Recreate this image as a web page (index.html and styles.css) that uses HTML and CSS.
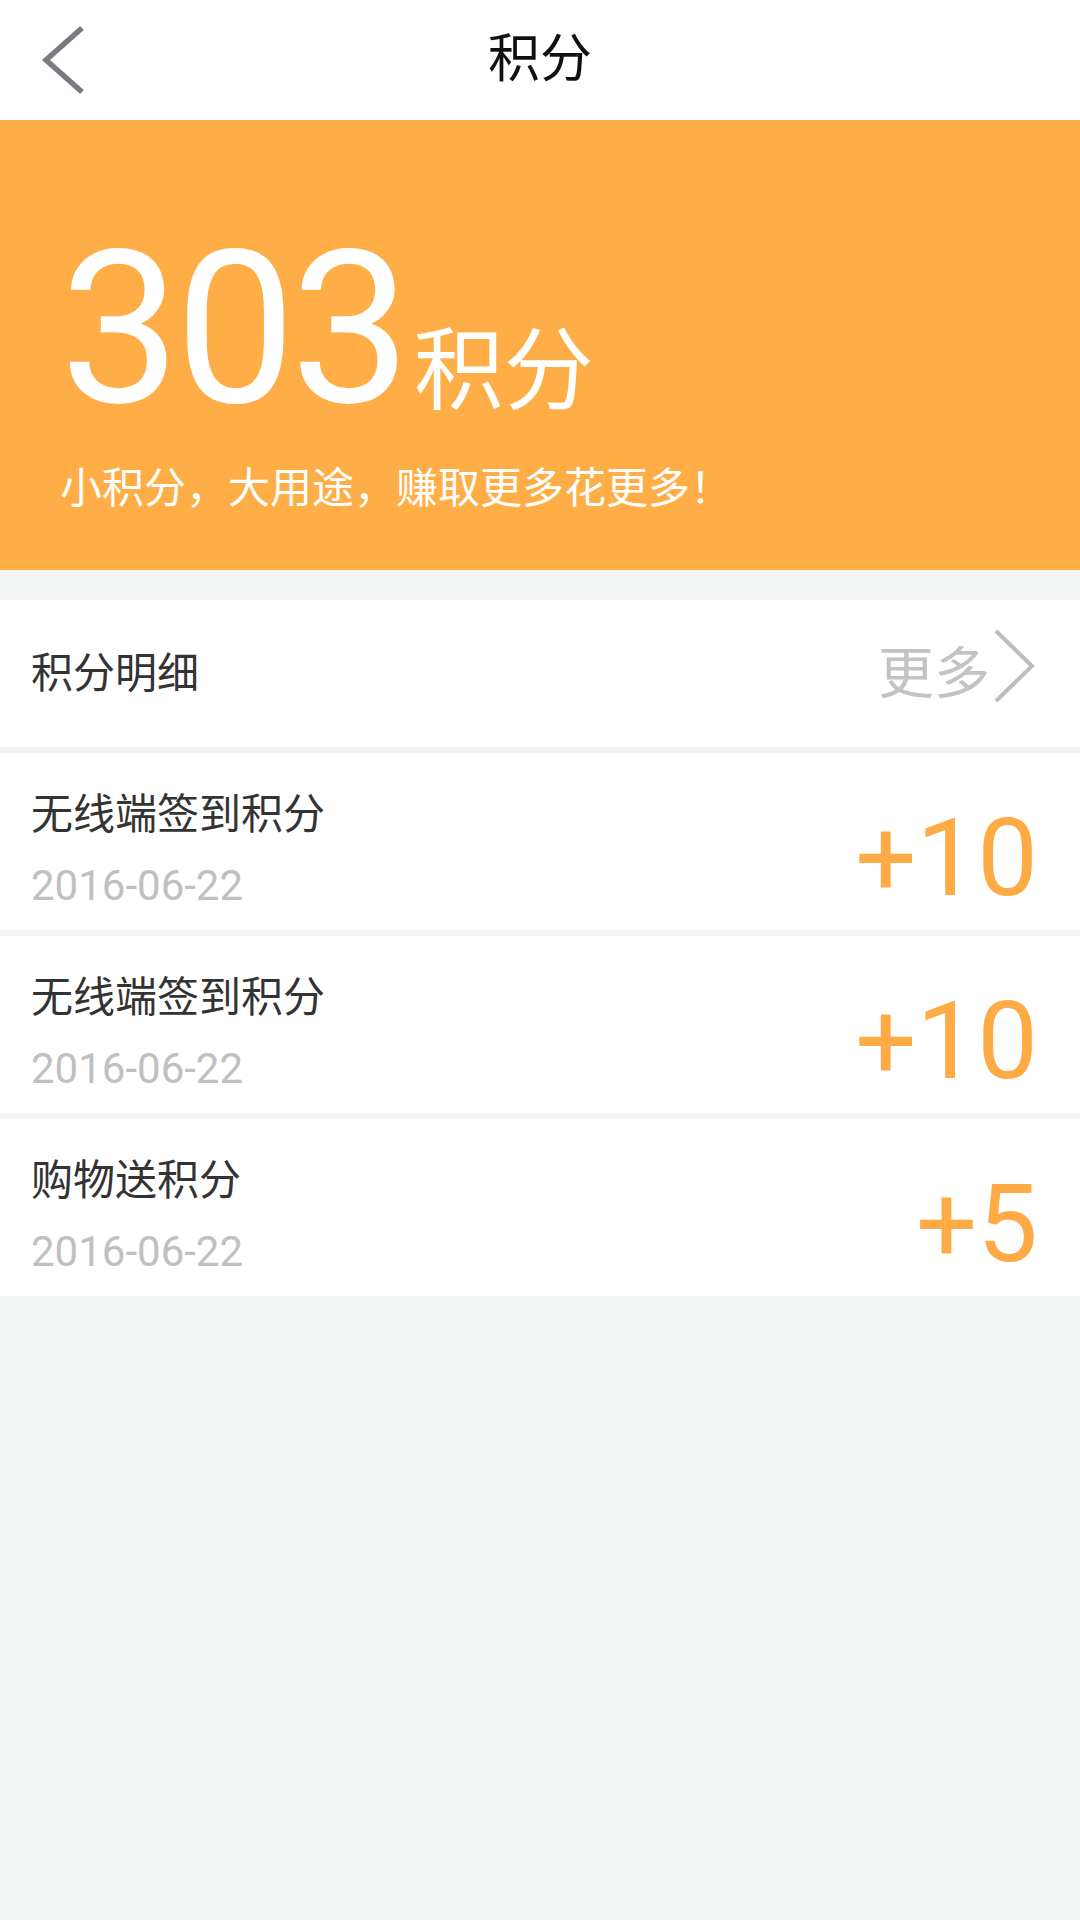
FILE: index.html
```html
<!DOCTYPE html>
<html lang="zh-CN">
<head>
<meta charset="utf-8">
<title>积分</title>
<link rel="stylesheet" href="styles.css">
</head>
<body>
<div class="page">
  <header class="topbar">
    <div class="back">
      <svg width="48" height="72" viewBox="0 0 48 72" class="back-icon">
        <polyline points="42,4 6,36 42,68" fill="none" stroke="#7a7a82" stroke-width="5.5" stroke-linejoin="miter"/>
      </svg>
    </div>
    <h1 class="title">积分</h1>
    <div class="spacer"></div>
  </header>

  <section class="banner">
    <div class="points">
      <span class="num">303</span><span class="unit">积分</span>
    </div>
    <p class="slogan">小积分，大用途，赚取更多花更多！</p>
  </section>

  <div class="detail-head">
    <span class="detail-title">积分明细</span>
    <span class="more">更多<svg class="more-icon" width="44" height="76" viewBox="0 0 44 76"><polyline points="4,3 40,38 4,73" fill="none" stroke="#bdbdbd" stroke-width="4"/></svg></span>
  </div>

  <ul class="list">
    <li class="item">
      <div class="info">
        <div class="name">无线端签到积分</div>
        <div class="date">2016-06-22</div>
      </div>
      <div class="amount">+10</div>
    </li>
    <li class="item">
      <div class="info">
        <div class="name">无线端签到积分</div>
        <div class="date">2016-06-22</div>
      </div>
      <div class="amount">+10</div>
    </li>
    <li class="item">
      <div class="info">
        <div class="name">购物送积分</div>
        <div class="date">2016-06-22</div>
      </div>
      <div class="amount">+5</div>
    </li>
  </ul>
</div>
</body>
</html>
```

FILE: styles.css
```css
* { box-sizing: border-box; }
html, body {
  margin: 0;
  padding: 0;
  background: #f2f3f3;
  font-family: Roboto, "Noto Sans CJK SC", sans-serif;
}
.page {
  width: 1080px;
  min-height: 1920px;
  background: #f2f3f3;
}
.topbar {
  height: 120px;
  background: #ffffff;
  display: grid;
  grid-template-columns: 1fr auto 1fr;
  align-items: center;
}
.back {
  padding-left: 40px;
  display: flex;
  align-items: center;
  height: 120px;
}
.back-icon { display: block; }
.title {
  margin: 0;
  font-size: 52px;
  font-weight: 400;
  color: #111111;
  line-height: 1;
}
.banner {
  height: 450px;
  background: #ffae47;
  padding: 102px 0 0 60px;
  color: #ffffff;
}
.points {
  display: flex;
  align-items: baseline;
}
.num {
  font-size: 214px;
  line-height: 1;
  font-weight: 400;
  letter-spacing: -5px;
}
.unit {
  font-size: 90px;
  line-height: 1;
  margin-left: 8px;
}
.slogan {
  margin: 28px 0 0 0;
  font-size: 42px;
  line-height: 50px;
}
.detail-head {
  margin-top: 30px;
  height: 147px;
  background: #ffffff;
  padding: 0 44px 0 31px;
  display: flex;
  align-items: center;
  justify-content: space-between;
}
.detail-title {
  font-size: 42px;
  color: #333333;
  line-height: 50px;
}
.more {
  display: flex;
  align-items: center;
  font-size: 56px;
  color: #c3c3c3;
  line-height: 1;
}
.more-icon {
  display: block;
  margin-left: 2px;
  margin-top: -16px;
}
.list {
  list-style: none;
  margin: 0;
  padding: 0;
}
.item {
  margin-top: 6px;
  height: 177px;
  background: #ffffff;
  padding: 37px 42px 20px 31px;
  display: flex;
  justify-content: space-between;
  align-items: flex-end;
}
.name {
  font-size: 42px;
  line-height: 50px;
  color: #333333;
}
.date {
  margin-top: 22px;
  font-size: 42px;
  line-height: 48px;
  color: #c0c0c0;
}
.amount {
  font-size: 108px;
  line-height: 1;
  color: #ffab45;
  margin-bottom: -2px;
}
```
